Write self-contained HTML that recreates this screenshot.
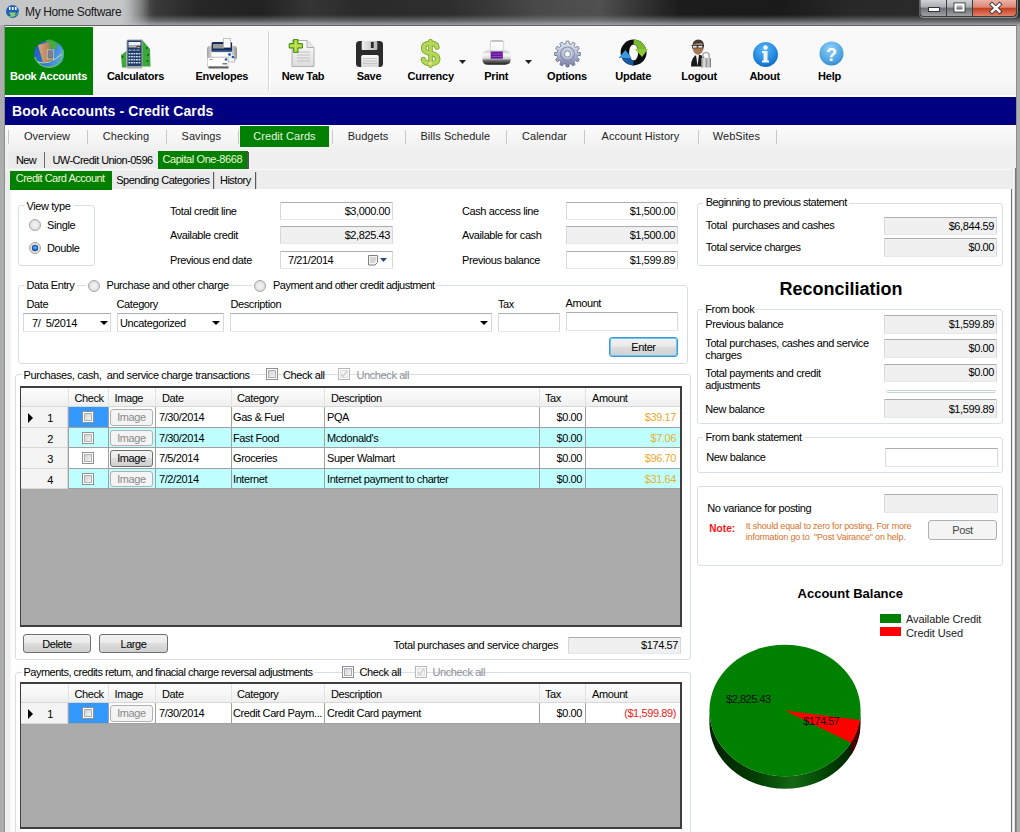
<!DOCTYPE html><html><head><meta charset='utf-8'><style>
*{margin:0;padding:0}
html,body{width:1020px;height:832px;overflow:hidden;background:#acaeae;font-family:"Liberation Sans",sans-serif;}
.t{position:absolute;white-space:nowrap;}
.b{position:absolute;}
.btn{border:1px solid #707070;border-radius:3px;box-sizing:border-box;background:linear-gradient(#f2f2f2 0%,#ebebeb 45%,#dddddd 50%,#cfcfcf 100%);}
</style></head><body><div class="b" style="left:0px;top:0px;width:1020px;height:26px;background:linear-gradient(90deg,#c2c4c6 0px,#c0c2c4 118px,#707070 135px,#3a3a3a 155px,#262626 200px,#222 260px,#353535 310px,#2a2a2a 360px,#2e2e2e 450px,#3c3c3c 500px,#4a4a4a 540px,#505050 600px,#3a3a3a 630px,#1c1c1c 680px,#1a1a1a 780px,#282828 850px,#2c2c2c 1020px);"></div><div class="b" style="left:0px;top:15px;width:1020px;height:11px;background:linear-gradient(rgba(150,152,155,0) 0%,rgba(150,153,157,0.55) 55%,rgba(175,178,182,0.95) 100%);"></div><div class="b" style="left:0px;top:0px;width:150px;height:25px;background:linear-gradient(90deg,rgba(196,198,200,1) 80%,rgba(196,198,200,0) 100%);"></div><svg class="b" style="left:5px;top:4px" width="15" height="15"><circle cx="7.5" cy="7.5" r="6.5" fill="#1f5fb8"/><rect x="4" y="3" width="1.6" height="3" fill="#fff"/><rect x="7" y="3" width="1.6" height="3" fill="#fff"/><rect x="10" y="3" width="1.6" height="3" fill="#fff"/><path d="M4 8.5 L11 8.5 L9 12 L6 12 Z" fill="#8fd06a"/><path d="M2 12 Q8 15 14 8" stroke="#7fd060" stroke-width="1" fill="none"/></svg><div class="t" style="top:5.34px;font-size:12px;line-height:15px;font-weight:normal;color:#1a1a1a;letter-spacing:-0.36px;left:25px;">My Home Software</div><svg class="b" style="left:918px;top:0px" width="101" height="19" viewBox="0 0 101 19">
<defs>
<linearGradient id="wbg" x1="0" y1="0" x2="0" y2="1"><stop offset="0" stop-color="#d0d3d6"/><stop offset="0.45" stop-color="#a9adb2"/><stop offset="0.5" stop-color="#6c7076"/><stop offset="1" stop-color="#9ea2a6"/></linearGradient>
<linearGradient id="wbr" x1="0" y1="0" x2="0" y2="1"><stop offset="0" stop-color="#ecb2a6"/><stop offset="0.45" stop-color="#dc8878"/><stop offset="0.52" stop-color="#c4401e"/><stop offset="1" stop-color="#e2806a"/></linearGradient>
</defs>
<path d="M1 0 L1 13 Q1 18 6 18 L95 18 Q100 18 100 13 L100 0 Z" fill="#d8dadc" opacity="0.5"/>
<path d="M1.5 0 L1.5 12.5 Q1.5 17 6 17 L94.5 17 Q99 17 99 12.5 L99 0 Z" fill="#3a3c3e"/>
<path d="M2.5 0 L2.5 12 Q2.5 16 6 16 L28 16 L28 0 Z" fill="url(#wbg)"/>
<rect x="29" y="0" width="25" height="16" fill="url(#wbg)"/>
<path d="M55 0 L55 16 L94 16 Q98 16 98 12 L98 0 Z" fill="url(#wbr)"/>
<rect x="10.5" y="7.5" width="11" height="4" fill="#fff" stroke="#333" stroke-width="1"/>
<rect x="36" y="3" width="11" height="9" fill="none" stroke="#333" stroke-width="1"/>
<rect x="37.5" y="4.5" width="8" height="6" fill="none" stroke="#fff" stroke-width="2"/>
<path d="M74 4.5 L81.5 11.5 M81.5 4.5 L74 11.5" stroke="#333" stroke-width="4.2" stroke-linecap="square"/>
<path d="M74 4.5 L81.5 11.5 M81.5 4.5 L74 11.5" stroke="#fff" stroke-width="2.4" stroke-linecap="square"/>
</svg><div class="b" style="left:4px;top:25px;width:1013px;height:807px;background:#f0f0f0;border:1px solid #8a8c8e;border-top-color:#606468;border-bottom:none;box-sizing:border-box;"></div><div class="b" style="left:5px;top:26px;width:1011px;height:70px;background:linear-gradient(#f9f9f9 0%,#f8f8f8 80%,#f0f0f0 100%);"></div><div class="b" style="left:5px;top:27px;width:88px;height:68px;background:#008000;"></div><div class="b" style="left:268px;top:31px;width:1px;height:60px;background:#d6d6d6;"></div><div class="b" style="left:269px;top:31px;width:1px;height:60px;background:#ffffff;"></div><div class="b" style="left:5px;top:95px;width:1011px;height:2px;background:#fff;"></div><div class="t" style="top:69.19px;font-size:11px;line-height:14px;font-weight:bold;color:#fff;letter-spacing:-0.25px;left:-251.5px;width:600px;text-align:center;">Book Accounts</div><div class="t" style="top:69.19px;font-size:11px;line-height:14px;font-weight:bold;color:#000;letter-spacing:-0.25px;left:-164.5px;width:600px;text-align:center;">Calculators</div><div class="t" style="top:69.19px;font-size:11px;line-height:14px;font-weight:bold;color:#000;letter-spacing:-0.25px;left:-78.19999999999999px;width:600px;text-align:center;">Envelopes</div><div class="t" style="top:69.19px;font-size:11px;line-height:14px;font-weight:bold;color:#000;letter-spacing:-0.25px;left:3px;width:600px;text-align:center;">New Tab</div><div class="t" style="top:69.19px;font-size:11px;line-height:14px;font-weight:bold;color:#000;letter-spacing:-0.25px;left:69px;width:600px;text-align:center;">Save</div><div class="t" style="top:69.19px;font-size:11px;line-height:14px;font-weight:bold;color:#000;letter-spacing:-0.25px;left:130.7px;width:600px;text-align:center;">Currency</div><div class="t" style="top:69.19px;font-size:11px;line-height:14px;font-weight:bold;color:#000;letter-spacing:-0.25px;left:196.2px;width:600px;text-align:center;">Print</div><div class="t" style="top:69.19px;font-size:11px;line-height:14px;font-weight:bold;color:#000;letter-spacing:-0.25px;left:267px;width:600px;text-align:center;">Options</div><div class="t" style="top:69.19px;font-size:11px;line-height:14px;font-weight:bold;color:#000;letter-spacing:-0.25px;left:333.20000000000005px;width:600px;text-align:center;">Update</div><div class="t" style="top:69.19px;font-size:11px;line-height:14px;font-weight:bold;color:#000;letter-spacing:-0.25px;left:399.1px;width:600px;text-align:center;">Logout</div><div class="t" style="top:69.19px;font-size:11px;line-height:14px;font-weight:bold;color:#000;letter-spacing:-0.25px;left:464.70000000000005px;width:600px;text-align:center;">About</div><div class="t" style="top:69.19px;font-size:11px;line-height:14px;font-weight:bold;color:#000;letter-spacing:-0.25px;left:529.5px;width:600px;text-align:center;">Help</div><svg class="b" style="left:459px;top:60px" width="7" height="4"><path d="M0 0 L7 0 L3.5 4 Z" fill="#222"/></svg><svg class="b" style="left:525px;top:60px" width="7" height="4"><path d="M0 0 L7 0 L3.5 4 Z" fill="#222"/></svg><div class="b" style="left:5px;top:97px;width:1011px;height:28px;background:#000080;"></div><div class="t" style="top:102.15px;font-size:14px;line-height:18px;font-weight:bold;color:#fff;letter-spacing:0.1px;left:12px;">Book Accounts - Credit Cards</div><div class="b" style="left:5px;top:125px;width:1011px;height:26px;background:linear-gradient(#fbfbfb,#f0f0f0);"></div><div class="b" style="left:8px;top:130px;width:1px;height:14px;background:#c8c8c8;"></div><div class="b" style="left:87px;top:130px;width:1px;height:14px;background:#c8c8c8;"></div><div class="b" style="left:166px;top:130px;width:1px;height:14px;background:#c8c8c8;"></div><div class="b" style="left:238px;top:130px;width:1px;height:14px;background:#c8c8c8;"></div><div class="b" style="left:332px;top:130px;width:1px;height:14px;background:#c8c8c8;"></div><div class="b" style="left:405px;top:130px;width:1px;height:14px;background:#c8c8c8;"></div><div class="b" style="left:506px;top:130px;width:1px;height:14px;background:#c8c8c8;"></div><div class="b" style="left:584px;top:130px;width:1px;height:14px;background:#c8c8c8;"></div><div class="b" style="left:698px;top:130px;width:1px;height:14px;background:#c8c8c8;"></div><div class="b" style="left:776px;top:130px;width:1px;height:14px;background:#c8c8c8;"></div><div class="b" style="left:240px;top:126px;width:89px;height:21px;background:#008000;"></div><div class="t" style="top:129.19px;font-size:11px;line-height:14px;font-weight:normal;color:#1e1e1e;letter-spacing:0.05px;left:-253px;width:600px;text-align:center;">Overview</div><div class="t" style="top:129.19px;font-size:11px;line-height:14px;font-weight:normal;color:#1e1e1e;letter-spacing:0.05px;left:-174px;width:600px;text-align:center;">Checking</div><div class="t" style="top:129.19px;font-size:11px;line-height:14px;font-weight:normal;color:#1e1e1e;letter-spacing:0.05px;left:-98.69999999999999px;width:600px;text-align:center;">Savings</div><div class="t" style="top:129.19px;font-size:11px;line-height:14px;font-weight:normal;color:#e8f5e0;letter-spacing:0.05px;left:-15.5px;width:600px;text-align:center;">Credit Cards</div><div class="t" style="top:129.19px;font-size:11px;line-height:14px;font-weight:normal;color:#1e1e1e;letter-spacing:0.05px;left:68px;width:600px;text-align:center;">Budgets</div><div class="t" style="top:129.19px;font-size:11px;line-height:14px;font-weight:normal;color:#1e1e1e;letter-spacing:0.05px;left:155.3px;width:600px;text-align:center;">Bills Schedule</div><div class="t" style="top:129.19px;font-size:11px;line-height:14px;font-weight:normal;color:#1e1e1e;letter-spacing:0.05px;left:244.5px;width:600px;text-align:center;">Calendar</div><div class="t" style="top:129.19px;font-size:11px;line-height:14px;font-weight:normal;color:#1e1e1e;letter-spacing:0.05px;left:340.5px;width:600px;text-align:center;">Account History</div><div class="t" style="top:129.19px;font-size:11px;line-height:14px;font-weight:normal;color:#1e1e1e;letter-spacing:0.05px;left:436.4px;width:600px;text-align:center;">WebSites</div><div class="b" style="left:5px;top:151px;width:1011px;height:20px;background:#f0f0f0;"></div><div class="b" style="left:8px;top:152px;width:150px;height:16px;background:#ebebeb;"></div><div class="b" style="left:44px;top:152px;width:1px;height:16px;background:#6a6a6a;"></div><div class="b" style="left:158px;top:151px;width:90px;height:18px;background:#008000;"></div><div class="b" style="left:247px;top:152px;width:2px;height:17px;background:#555;"></div><div class="t" style="top:152.69px;font-size:11px;line-height:14px;font-weight:normal;color:#000;letter-spacing:-0.6px;left:-274px;width:600px;text-align:center;">New</div><div class="t" style="top:152.69px;font-size:11px;line-height:14px;font-weight:normal;color:#000;letter-spacing:-0.55px;left:-197.5px;width:600px;text-align:center;">UW-Credit Union-0596</div><div class="t" style="top:151.69px;font-size:11px;line-height:14px;font-weight:normal;color:#f0f5d8;letter-spacing:-0.4px;left:-97.69999999999999px;width:600px;text-align:center;">Capital One-8668</div><div class="b" style="left:5px;top:169px;width:1011px;height:1px;background:#f8f8f8;"></div><div class="b" style="left:5px;top:170px;width:1011px;height:20px;background:#ededed;"></div><div class="b" style="left:10px;top:171px;width:102px;height:20px;background:#008000;"></div><div class="b" style="left:112px;top:172px;width:144px;height:17px;background:#ebebeb;"></div><div class="b" style="left:213px;top:172px;width:1px;height:17px;background:#5a5a5a;"></div><div class="b" style="left:214px;top:172px;width:1px;height:17px;background:#d0d0d0;"></div><div class="b" style="left:255px;top:172px;width:1px;height:17px;background:#5a5a5a;"></div><div class="b" style="left:256px;top:172px;width:1px;height:17px;background:#d0d0d0;"></div><div class="t" style="top:171.19px;font-size:11px;line-height:14px;font-weight:normal;color:#f0f5d8;letter-spacing:-0.5px;left:-239.8px;width:600px;text-align:center;">Credit Card Account</div><div class="t" style="top:173.19px;font-size:11px;line-height:14px;font-weight:normal;color:#000;letter-spacing:-0.5px;left:-137.2px;width:600px;text-align:center;">Spending Categories</div><div class="t" style="top:173.19px;font-size:11px;line-height:14px;font-weight:normal;color:#000;letter-spacing:-0.5px;left:-64.69999999999999px;width:600px;text-align:center;">History</div><div class="b" style="left:5px;top:190px;width:1011px;height:642px;background:#f0f0f0;"></div><div class="b" style="left:5px;top:190px;width:7px;height:642px;background:linear-gradient(90deg,#fafafa 0px,#f0f0f0 1px,#eeeeee 5px,#fafafa 8px);"></div><div class="b" style="left:10px;top:189px;width:1001px;height:643px;background:linear-gradient(90deg,#f6f6f6 0px,#fff 3px);"></div><div class="b" style="left:1011px;top:189px;width:1px;height:643px;background:#6e6e6e;"></div><div class="b" style="left:10px;top:189px;width:102px;height:1px;background:#008000;"></div><div class="b" style="left:1012px;top:168px;width:3px;height:664px;background:#e4e4e4;"></div><div class="b" style="left:1013px;top:168px;width:1px;height:664px;background:#fafafa;"></div><div class="b" style="left:1015px;top:168px;width:1px;height:664px;background:#7a7a7a;"></div><div class="b" style="left:18px;top:205px;width:77px;height:61px;border:1px solid #d5dfe5;border-radius:3px;box-sizing:border-box;"></div><div class="b" style="left:24px;top:204px;width:50px;height:3px;background:#fff;"></div><div class="t" style="top:198.79px;font-size:11px;line-height:14px;font-weight:normal;color:#000;letter-spacing:-0.4px;left:26.5px;">View type</div><svg class="b" style="left:29px;top:219px" width="12" height="12"><defs><radialGradient id="rg29219" cx="0.5" cy="0.5" r="0.5"><stop offset="0" stop-color="#f6f6f6"/><stop offset="0.7" stop-color="#e6e6e6"/><stop offset="1" stop-color="#d0d0d0"/></radialGradient><radialGradient id="rd29219" cx="0.5" cy="0.45" r="0.55"><stop offset="0" stop-color="#7cc8fa"/><stop offset="0.5" stop-color="#2a7ad8"/><stop offset="1" stop-color="#143c78"/></radialGradient></defs><circle cx="6" cy="6" r="5.5" fill="url(#rg29219)" stroke="#a8a8a8" stroke-width="1"/></svg><div class="t" style="top:217.99px;font-size:11px;line-height:14px;font-weight:normal;color:#000;letter-spacing:-0.4px;left:47px;">Single</div><svg class="b" style="left:29px;top:242px" width="12" height="12"><defs><radialGradient id="rg29242" cx="0.5" cy="0.5" r="0.5"><stop offset="0" stop-color="#f6f6f6"/><stop offset="0.7" stop-color="#e6e6e6"/><stop offset="1" stop-color="#d0d0d0"/></radialGradient><radialGradient id="rd29242" cx="0.5" cy="0.45" r="0.55"><stop offset="0" stop-color="#7cc8fa"/><stop offset="0.5" stop-color="#2a7ad8"/><stop offset="1" stop-color="#143c78"/></radialGradient></defs><circle cx="6" cy="6" r="5.5" fill="url(#rg29242)" stroke="#a8a8a8" stroke-width="1"/><circle cx="6" cy="6" r="3.2" fill="url(#rd29242)"/></svg><div class="t" style="top:240.99px;font-size:11px;line-height:14px;font-weight:normal;color:#000;letter-spacing:-0.4px;left:47px;">Double</div><div class="t" style="top:204.19px;font-size:11px;line-height:14px;font-weight:normal;color:#000;letter-spacing:-0.4px;left:170px;">Total credit line</div><div class="t" style="top:228.19px;font-size:11px;line-height:14px;font-weight:normal;color:#000;letter-spacing:-0.4px;left:170px;">Available credit</div><div class="t" style="top:252.69px;font-size:11px;line-height:14px;font-weight:normal;color:#000;letter-spacing:-0.4px;left:170px;">Previous end date</div><div class="b" style="left:280px;top:202px;width:113px;height:18px;background:#fff;border:1px solid #d5d9de;border-top-color:#abadb3;border-bottom-color:#e3e9ef;box-sizing:border-box;border-radius:1px;"></div><div class="t" style="top:204.19px;font-size:11px;line-height:14px;font-weight:normal;color:#000;letter-spacing:-0.4px;right:630px;text-align:right;">$3,000.00</div><div class="b" style="left:280px;top:226px;width:113px;height:18px;background:#f0f0f0;border:1px solid #d5d9de;border-top-color:#abadb3;border-bottom-color:#e3e9ef;box-sizing:border-box;border-radius:1px;"></div><div class="t" style="top:228.19px;font-size:11px;line-height:14px;font-weight:normal;color:#000;letter-spacing:-0.4px;right:630px;text-align:right;">$2,825.43</div><div class="b" style="left:280px;top:251px;width:113px;height:18px;background:#fff;border:1px solid #d5d9de;border-top-color:#abadb3;border-bottom-color:#e3e9ef;box-sizing:border-box;border-radius:1px;"></div><div class="t" style="top:252.79px;font-size:11px;line-height:14px;font-weight:normal;color:#000;letter-spacing:-0.4px;left:288px;">7/21/2014</div><svg class="b" style="left:367px;top:254px" width="21" height="13"><path d="M1.5 1.5 h9 v7 l-2.5 2.5 h-6.5 Z" fill="#f4f4f4" stroke="#808080" stroke-width="1"/><path d="M3 4h6M3 6h6M3 8h5" stroke="#b8b8b8" stroke-width="1"/><path d="M13 4 L20 4 L16.5 8 Z" fill="#2a4a80"/></svg><div class="t" style="top:204.19px;font-size:11px;line-height:14px;font-weight:normal;color:#000;letter-spacing:-0.4px;left:462px;">Cash access line</div><div class="t" style="top:228.19px;font-size:11px;line-height:14px;font-weight:normal;color:#000;letter-spacing:-0.4px;left:462px;">Available for cash</div><div class="t" style="top:252.69px;font-size:11px;line-height:14px;font-weight:normal;color:#000;letter-spacing:-0.4px;left:462px;">Previous balance</div><div class="b" style="left:566px;top:202px;width:112px;height:18px;background:#fff;border:1px solid #d5d9de;border-top-color:#abadb3;border-bottom-color:#e3e9ef;box-sizing:border-box;border-radius:1px;"></div><div class="t" style="top:204.19px;font-size:11px;line-height:14px;font-weight:normal;color:#000;letter-spacing:-0.4px;right:345px;text-align:right;">$1,500.00</div><div class="b" style="left:566px;top:226px;width:112px;height:18px;background:#f0f0f0;border:1px solid #d5d9de;border-top-color:#abadb3;border-bottom-color:#e3e9ef;box-sizing:border-box;border-radius:1px;"></div><div class="t" style="top:228.19px;font-size:11px;line-height:14px;font-weight:normal;color:#000;letter-spacing:-0.4px;right:345px;text-align:right;">$1,500.00</div><div class="b" style="left:566px;top:251px;width:112px;height:18px;background:#fff;border:1px solid #d5d9de;border-top-color:#abadb3;border-bottom-color:#e3e9ef;box-sizing:border-box;border-radius:1px;"></div><div class="t" style="top:252.69px;font-size:11px;line-height:14px;font-weight:normal;color:#000;letter-spacing:-0.4px;right:345px;text-align:right;">$1,599.89</div><div class="b" style="left:18px;top:285px;width:670px;height:79px;border:1px solid #d5dfe5;border-radius:3px;box-sizing:border-box;"></div><div class="b" style="left:24px;top:280px;width:53px;height:12px;background:#fff;"></div><div class="b" style="left:86px;top:280px;width:144px;height:12px;background:#fff;"></div><div class="b" style="left:252px;top:280px;width:184px;height:12px;background:#fff;"></div><div class="t" style="top:278.19px;font-size:11px;line-height:14px;font-weight:normal;color:#000;letter-spacing:-0.4px;left:26.5px;">Data Entry</div><svg class="b" style="left:88px;top:280px" width="12" height="12"><defs><radialGradient id="rg88280" cx="0.5" cy="0.5" r="0.5"><stop offset="0" stop-color="#f6f6f6"/><stop offset="0.7" stop-color="#e6e6e6"/><stop offset="1" stop-color="#d0d0d0"/></radialGradient><radialGradient id="rd88280" cx="0.5" cy="0.45" r="0.55"><stop offset="0" stop-color="#7cc8fa"/><stop offset="0.5" stop-color="#2a7ad8"/><stop offset="1" stop-color="#143c78"/></radialGradient></defs><circle cx="6" cy="6" r="5.5" fill="url(#rg88280)" stroke="#a8a8a8" stroke-width="1"/></svg><div class="t" style="top:278.19px;font-size:11px;line-height:14px;font-weight:normal;color:#000;letter-spacing:-0.42px;left:106.5px;">Purchase and other charge</div><svg class="b" style="left:254px;top:280px" width="12" height="12"><defs><radialGradient id="rg254280" cx="0.5" cy="0.5" r="0.5"><stop offset="0" stop-color="#f6f6f6"/><stop offset="0.7" stop-color="#e6e6e6"/><stop offset="1" stop-color="#d0d0d0"/></radialGradient><radialGradient id="rd254280" cx="0.5" cy="0.45" r="0.55"><stop offset="0" stop-color="#7cc8fa"/><stop offset="0.5" stop-color="#2a7ad8"/><stop offset="1" stop-color="#143c78"/></radialGradient></defs><circle cx="6" cy="6" r="5.5" fill="url(#rg254280)" stroke="#a8a8a8" stroke-width="1"/></svg><div class="t" style="top:278.19px;font-size:11px;line-height:14px;font-weight:normal;color:#000;letter-spacing:-0.52px;left:273px;">Payment and other credit adjustment</div><div class="t" style="top:297.19px;font-size:11px;line-height:14px;font-weight:normal;color:#000;letter-spacing:-0.4px;left:26.5px;">Date</div><div class="t" style="top:297.19px;font-size:11px;line-height:14px;font-weight:normal;color:#000;letter-spacing:-0.4px;left:116.5px;">Category</div><div class="t" style="top:297.19px;font-size:11px;line-height:14px;font-weight:normal;color:#000;letter-spacing:-0.4px;left:230.5px;">Description</div><div class="t" style="top:297.19px;font-size:11px;line-height:14px;font-weight:normal;color:#000;letter-spacing:-0.4px;left:498px;">Tax</div><div class="t" style="top:296.19px;font-size:11px;line-height:14px;font-weight:normal;color:#000;letter-spacing:-0.4px;left:565.5px;">Amount</div><div class="b" style="left:23px;top:313px;width:88px;height:19px;background:#fff;border:1px solid #d5d9de;border-top-color:#abadb3;border-bottom-color:#e3e9ef;box-sizing:border-box;border-radius:1px;"></div><div class="t" style="top:316.19px;font-size:11px;line-height:14px;font-weight:normal;color:#000;letter-spacing:-0.4px;left:32px;">7/&nbsp;&nbsp;5/2014</div><div class="b" style="left:117px;top:313px;width:107px;height:19px;background:#fff;border:1px solid #d5d9de;border-top-color:#abadb3;border-bottom-color:#e3e9ef;box-sizing:border-box;border-radius:1px;"></div><div class="t" style="top:316.19px;font-size:11px;line-height:14px;font-weight:normal;color:#000;letter-spacing:-0.4px;left:120px;">Uncategorized</div><div class="b" style="left:230px;top:313px;width:262px;height:19px;background:#fff;border:1px solid #d5d9de;border-top-color:#abadb3;border-bottom-color:#e3e9ef;box-sizing:border-box;border-radius:1px;"></div><svg class="b" style="left:99.5px;top:321px" width="8" height="4"><path d="M0 0 L8 0 L4 4 Z" fill="#000"/></svg><svg class="b" style="left:212px;top:321px" width="8" height="4"><path d="M0 0 L8 0 L4 4 Z" fill="#000"/></svg><svg class="b" style="left:480px;top:321px" width="8" height="4"><path d="M0 0 L8 0 L4 4 Z" fill="#000"/></svg><div class="b" style="left:498px;top:313px;width:62px;height:19px;background:#fff;border:1px solid #d5d9de;border-top-color:#abadb3;border-bottom-color:#e3e9ef;box-sizing:border-box;border-radius:1px;"></div><div class="b" style="left:566px;top:312px;width:112px;height:19px;background:#fff;border:1px solid #d5d9de;border-top-color:#abadb3;border-bottom-color:#e3e9ef;box-sizing:border-box;border-radius:1px;"></div><div class="b btn" style="left:609px;top:337px;width:69px;height:20px;border-color:#3c9ad6;border-width:1px;box-shadow:inset 0 0 0 1px #6dc3ef;"></div><div class="t" style="top:340.19px;font-size:11px;line-height:14px;font-weight:normal;color:#000;letter-spacing:-0.4px;left:343.5px;width:600px;text-align:center;">Enter</div><div class="b" style="left:15px;top:374px;width:676px;height:286px;border:1px solid #d5dfe5;border-radius:3px;box-sizing:border-box;"></div><div class="b" style="left:22px;top:368px;width:229px;height:14px;background:#fff;"></div><div class="t" style="top:368.19px;font-size:11px;line-height:14px;font-weight:normal;color:#000;letter-spacing:-0.4px;left:23.5px;">Purchases, cash,&nbsp; and service charge transactions</div><svg class="b" style="left:266px;top:368px" width="13" height="13" viewBox="0 0 13 13"><defs><linearGradient id="cb266_368" x1="0" y1="0" x2="1" y2="1"><stop offset="0" stop-color="#cbcfd5"/><stop offset="1" stop-color="#f6f6f6"/></linearGradient></defs><rect x="0.5" y="0.5" width="11" height="11" fill="#fff" stroke="#8e8f8f"/><rect x="2.5" y="2.5" width="7" height="7" fill="url(#cb266_368)" stroke="#b0b0b0" stroke-width="1"/></svg><div class="t" style="top:368.19px;font-size:11px;line-height:14px;font-weight:normal;color:#000;letter-spacing:-0.4px;left:283px;">Check all</div><svg class="b" style="left:338px;top:368px" width="13" height="13" viewBox="0 0 13 13"><defs><linearGradient id="cb338_368" x1="0" y1="0" x2="1" y2="1"><stop offset="0" stop-color="#cbcfd5"/><stop offset="1" stop-color="#f6f6f6"/></linearGradient></defs><rect x="0.5" y="0.5" width="11" height="11" fill="#fff" stroke="#b8b8b8"/><rect x="2.5" y="2.5" width="7" height="7" fill="#f4f4f4" stroke="#e0e0e0" stroke-width="1"/><path d="M3 6 L5 8.5 L9 2.5" stroke="#c8c8c8" stroke-width="1.2" fill="none"/></svg><div class="t" style="top:368.19px;font-size:11px;line-height:14px;font-weight:normal;color:#8d8d95;letter-spacing:-0.4px;left:356.5px;">Uncheck all</div><div class="b" style="left:20px;top:386px;width:662px;height:241px;background:#ababab;border:2px solid #3e3e3e;border-width:2px 2px 2px 1.5px;box-sizing:border-box;"></div><div class="b" style="left:21px;top:388px;width:659px;height:19px;background:linear-gradient(#fcfcfc 0%,#f7f7f7 50%,#efefef 100%);border-bottom:1px solid #d8d8d8;box-sizing:border-box;"></div><div class="b" style="left:68px;top:388px;width:1px;height:19px;background:#e2e2e2;"></div><div class="b" style="left:108px;top:388px;width:1px;height:19px;background:#e2e2e2;"></div><div class="b" style="left:155px;top:388px;width:1px;height:19px;background:#e2e2e2;"></div><div class="b" style="left:231px;top:388px;width:1px;height:19px;background:#e2e2e2;"></div><div class="b" style="left:324px;top:388px;width:1px;height:19px;background:#e2e2e2;"></div><div class="b" style="left:539px;top:388px;width:1px;height:19px;background:#e2e2e2;"></div><div class="b" style="left:585px;top:388px;width:1px;height:19px;background:#e2e2e2;"></div><div class="t" style="top:391.19px;font-size:11px;line-height:14px;font-weight:normal;color:#000;letter-spacing:-0.4px;left:74.5px;">Check</div><div class="t" style="top:391.19px;font-size:11px;line-height:14px;font-weight:normal;color:#000;letter-spacing:-0.4px;left:114.5px;">Image</div><div class="t" style="top:391.19px;font-size:11px;line-height:14px;font-weight:normal;color:#000;letter-spacing:-0.4px;left:162px;">Date</div><div class="t" style="top:391.19px;font-size:11px;line-height:14px;font-weight:normal;color:#000;letter-spacing:-0.4px;left:237px;">Category</div><div class="t" style="top:391.19px;font-size:11px;line-height:14px;font-weight:normal;color:#000;letter-spacing:-0.4px;left:331px;">Description</div><div class="t" style="top:391.19px;font-size:11px;line-height:14px;font-weight:normal;color:#000;letter-spacing:-0.4px;left:545px;">Tax</div><div class="t" style="top:391.19px;font-size:11px;line-height:14px;font-weight:normal;color:#000;letter-spacing:-0.4px;left:592px;">Amount</div><div class="b" style="left:21px;top:407px;width:47px;height:21px;background:#f4f4f4;border-bottom:1px solid #d8d8d8;border-right:1px solid #d8d8d8;box-sizing:border-box;"></div><div class="b" style="left:68px;top:407px;width:612px;height:21px;background:#ffffff;border-bottom:1px solid #a0a0a0;box-sizing:border-box;"></div><div class="b" style="left:69px;top:407px;width:39px;height:20px;background:#3399ff;"></div><div class="b" style="left:68px;top:407px;width:1px;height:21px;background:#a0a0a0;"></div><div class="b" style="left:108px;top:407px;width:1px;height:21px;background:#a0a0a0;"></div><div class="b" style="left:155px;top:407px;width:1px;height:21px;background:#a0a0a0;"></div><div class="b" style="left:231px;top:407px;width:1px;height:21px;background:#a0a0a0;"></div><div class="b" style="left:324px;top:407px;width:1px;height:21px;background:#a0a0a0;"></div><div class="b" style="left:539px;top:407px;width:1px;height:21px;background:#a0a0a0;"></div><div class="b" style="left:585px;top:407px;width:1px;height:21px;background:#a0a0a0;"></div><svg class="b" style="left:28px;top:413px" width="6" height="10"><path d="M0 0 L5 5 L0 10 Z" fill="#000"/></svg><div class="t" style="top:411.49px;font-size:11px;line-height:14px;font-weight:normal;color:#000;letter-spacing:-0.4px;left:-250px;width:600px;text-align:center;">1</div><svg class="b" style="left:82px;top:411px" width="13" height="13" viewBox="0 0 13 13"><defs><linearGradient id="cb82_411" x1="0" y1="0" x2="1" y2="1"><stop offset="0" stop-color="#cbcfd5"/><stop offset="1" stop-color="#f6f6f6"/></linearGradient></defs><rect x="0.5" y="0.5" width="11" height="11" fill="#fff" stroke="#8e8f8f"/><rect x="2.5" y="2.5" width="7" height="7" fill="url(#cb82_411)" stroke="#b0b0b0" stroke-width="1"/></svg><div class="b" style="left:110px;top:409px;width:43px;height:17px;border:1px solid #adb2b5;border-radius:3px;box-sizing:border-box;background:#f4f4f4;"></div><div class="t" style="top:410.49px;font-size:11px;line-height:14px;font-weight:normal;color:#8a8a8a;letter-spacing:-0.4px;left:-168.5px;width:600px;text-align:center;">Image</div><div class="t" style="top:410.49px;font-size:11px;line-height:14px;font-weight:normal;color:#000;letter-spacing:-0.4px;left:159px;">7/30/2014</div><div class="t" style="top:410.49px;font-size:11px;line-height:14px;font-weight:normal;color:#000;letter-spacing:-0.4px;left:233px;">Gas &amp; Fuel</div><div class="t" style="top:410.49px;font-size:11px;line-height:14px;font-weight:normal;color:#000;letter-spacing:-0.4px;left:327px;">PQA</div><div class="t" style="top:410.49px;font-size:11px;line-height:14px;font-weight:normal;color:#000;letter-spacing:-0.4px;right:438px;text-align:right;">$0.00</div><div class="t" style="top:410.49px;font-size:11px;line-height:14px;font-weight:normal;color:#f0a830;letter-spacing:-0.4px;right:344px;text-align:right;">$39.17</div><div class="b" style="left:21px;top:428px;width:47px;height:20px;background:#f4f4f4;border-bottom:1px solid #d8d8d8;border-right:1px solid #d8d8d8;box-sizing:border-box;"></div><div class="b" style="left:68px;top:428px;width:612px;height:20px;background:#bfffff;border-bottom:1px solid #a0a0a0;box-sizing:border-box;"></div><div class="b" style="left:68px;top:428px;width:1px;height:20px;background:#a0a0a0;"></div><div class="b" style="left:108px;top:428px;width:1px;height:20px;background:#a0a0a0;"></div><div class="b" style="left:155px;top:428px;width:1px;height:20px;background:#a0a0a0;"></div><div class="b" style="left:231px;top:428px;width:1px;height:20px;background:#a0a0a0;"></div><div class="b" style="left:324px;top:428px;width:1px;height:20px;background:#a0a0a0;"></div><div class="b" style="left:539px;top:428px;width:1px;height:20px;background:#a0a0a0;"></div><div class="b" style="left:585px;top:428px;width:1px;height:20px;background:#a0a0a0;"></div><div class="t" style="top:432.49px;font-size:11px;line-height:14px;font-weight:normal;color:#000;letter-spacing:-0.4px;left:-250px;width:600px;text-align:center;">2</div><svg class="b" style="left:82px;top:432px" width="13" height="13" viewBox="0 0 13 13"><defs><linearGradient id="cb82_432" x1="0" y1="0" x2="1" y2="1"><stop offset="0" stop-color="#cbcfd5"/><stop offset="1" stop-color="#f6f6f6"/></linearGradient></defs><rect x="0.5" y="0.5" width="11" height="11" fill="#fff" stroke="#8e8f8f"/><rect x="2.5" y="2.5" width="7" height="7" fill="url(#cb82_432)" stroke="#b0b0b0" stroke-width="1"/></svg><div class="b" style="left:110px;top:430px;width:43px;height:16px;border:1px solid #adb2b5;border-radius:3px;box-sizing:border-box;background:#f4f4f4;"></div><div class="t" style="top:431.49px;font-size:11px;line-height:14px;font-weight:normal;color:#8a8a8a;letter-spacing:-0.4px;left:-168.5px;width:600px;text-align:center;">Image</div><div class="t" style="top:431.49px;font-size:11px;line-height:14px;font-weight:normal;color:#000;letter-spacing:-0.4px;left:159px;">7/30/2014</div><div class="t" style="top:431.49px;font-size:11px;line-height:14px;font-weight:normal;color:#000;letter-spacing:-0.4px;left:233px;">Fast Food</div><div class="t" style="top:431.49px;font-size:11px;line-height:14px;font-weight:normal;color:#000;letter-spacing:-0.4px;left:327px;">Mcdonald's</div><div class="t" style="top:431.49px;font-size:11px;line-height:14px;font-weight:normal;color:#000;letter-spacing:-0.4px;right:438px;text-align:right;">$0.00</div><div class="t" style="top:431.49px;font-size:11px;line-height:14px;font-weight:normal;color:#e8b030;letter-spacing:-0.4px;right:344px;text-align:right;">$7.06</div><div class="b" style="left:21px;top:448px;width:47px;height:21px;background:#f4f4f4;border-bottom:1px solid #d8d8d8;border-right:1px solid #d8d8d8;box-sizing:border-box;"></div><div class="b" style="left:68px;top:448px;width:612px;height:21px;background:#ffffff;border-bottom:1px solid #a0a0a0;box-sizing:border-box;"></div><div class="b" style="left:68px;top:448px;width:1px;height:21px;background:#a0a0a0;"></div><div class="b" style="left:108px;top:448px;width:1px;height:21px;background:#a0a0a0;"></div><div class="b" style="left:155px;top:448px;width:1px;height:21px;background:#a0a0a0;"></div><div class="b" style="left:231px;top:448px;width:1px;height:21px;background:#a0a0a0;"></div><div class="b" style="left:324px;top:448px;width:1px;height:21px;background:#a0a0a0;"></div><div class="b" style="left:539px;top:448px;width:1px;height:21px;background:#a0a0a0;"></div><div class="b" style="left:585px;top:448px;width:1px;height:21px;background:#a0a0a0;"></div><div class="t" style="top:452.49px;font-size:11px;line-height:14px;font-weight:normal;color:#000;letter-spacing:-0.4px;left:-250px;width:600px;text-align:center;">3</div><svg class="b" style="left:82px;top:452px" width="13" height="13" viewBox="0 0 13 13"><defs><linearGradient id="cb82_452" x1="0" y1="0" x2="1" y2="1"><stop offset="0" stop-color="#cbcfd5"/><stop offset="1" stop-color="#f6f6f6"/></linearGradient></defs><rect x="0.5" y="0.5" width="11" height="11" fill="#fff" stroke="#8e8f8f"/><rect x="2.5" y="2.5" width="7" height="7" fill="url(#cb82_452)" stroke="#b0b0b0" stroke-width="1"/></svg><div class="b btn" style="left:110px;top:450px;width:43px;height:17px;border-color:#707070;"></div><div class="t" style="top:451.49px;font-size:11px;line-height:14px;font-weight:normal;color:#000;letter-spacing:-0.4px;left:-168.5px;width:600px;text-align:center;">Image</div><div class="t" style="top:451.49px;font-size:11px;line-height:14px;font-weight:normal;color:#000;letter-spacing:-0.4px;left:159px;">7/5/2014</div><div class="t" style="top:451.49px;font-size:11px;line-height:14px;font-weight:normal;color:#000;letter-spacing:-0.4px;left:233px;">Groceries</div><div class="t" style="top:451.49px;font-size:11px;line-height:14px;font-weight:normal;color:#000;letter-spacing:-0.4px;left:327px;">Super Walmart</div><div class="t" style="top:451.49px;font-size:11px;line-height:14px;font-weight:normal;color:#000;letter-spacing:-0.4px;right:438px;text-align:right;">$0.00</div><div class="t" style="top:451.49px;font-size:11px;line-height:14px;font-weight:normal;color:#f0a830;letter-spacing:-0.4px;right:344px;text-align:right;">$96.70</div><div class="b" style="left:21px;top:469px;width:47px;height:20px;background:#f4f4f4;border-bottom:1px solid #d8d8d8;border-right:1px solid #d8d8d8;box-sizing:border-box;"></div><div class="b" style="left:68px;top:469px;width:612px;height:20px;background:#bfffff;border-bottom:1px solid #a0a0a0;box-sizing:border-box;"></div><div class="b" style="left:68px;top:469px;width:1px;height:20px;background:#a0a0a0;"></div><div class="b" style="left:108px;top:469px;width:1px;height:20px;background:#a0a0a0;"></div><div class="b" style="left:155px;top:469px;width:1px;height:20px;background:#a0a0a0;"></div><div class="b" style="left:231px;top:469px;width:1px;height:20px;background:#a0a0a0;"></div><div class="b" style="left:324px;top:469px;width:1px;height:20px;background:#a0a0a0;"></div><div class="b" style="left:539px;top:469px;width:1px;height:20px;background:#a0a0a0;"></div><div class="b" style="left:585px;top:469px;width:1px;height:20px;background:#a0a0a0;"></div><div class="t" style="top:473.49px;font-size:11px;line-height:14px;font-weight:normal;color:#000;letter-spacing:-0.4px;left:-250px;width:600px;text-align:center;">4</div><svg class="b" style="left:82px;top:473px" width="13" height="13" viewBox="0 0 13 13"><defs><linearGradient id="cb82_473" x1="0" y1="0" x2="1" y2="1"><stop offset="0" stop-color="#cbcfd5"/><stop offset="1" stop-color="#f6f6f6"/></linearGradient></defs><rect x="0.5" y="0.5" width="11" height="11" fill="#fff" stroke="#8e8f8f"/><rect x="2.5" y="2.5" width="7" height="7" fill="url(#cb82_473)" stroke="#b0b0b0" stroke-width="1"/></svg><div class="b" style="left:110px;top:471px;width:43px;height:16px;border:1px solid #adb2b5;border-radius:3px;box-sizing:border-box;background:#f4f4f4;"></div><div class="t" style="top:472.49px;font-size:11px;line-height:14px;font-weight:normal;color:#8a8a8a;letter-spacing:-0.4px;left:-168.5px;width:600px;text-align:center;">Image</div><div class="t" style="top:472.49px;font-size:11px;line-height:14px;font-weight:normal;color:#000;letter-spacing:-0.4px;left:159px;">7/2/2014</div><div class="t" style="top:472.49px;font-size:11px;line-height:14px;font-weight:normal;color:#000;letter-spacing:-0.4px;left:233px;">Internet</div><div class="t" style="top:472.49px;font-size:11px;line-height:14px;font-weight:normal;color:#000;letter-spacing:-0.4px;left:327px;">Internet payment to charter</div><div class="t" style="top:472.49px;font-size:11px;line-height:14px;font-weight:normal;color:#000;letter-spacing:-0.4px;right:438px;text-align:right;">$0.00</div><div class="t" style="top:472.49px;font-size:11px;line-height:14px;font-weight:normal;color:#e8b030;letter-spacing:-0.4px;right:344px;text-align:right;">$31.64</div><div class="b btn" style="left:23px;top:634px;width:68px;height:19px;border-color:#707070;"></div><div class="t" style="top:637.19px;font-size:11px;line-height:14px;font-weight:normal;color:#000;letter-spacing:-0.4px;left:-243.0px;width:600px;text-align:center;">Delete</div><div class="b btn" style="left:99px;top:634px;width:69px;height:19px;border-color:#707070;"></div><div class="t" style="top:637.19px;font-size:11px;line-height:14px;font-weight:normal;color:#000;letter-spacing:-0.4px;left:-166.5px;width:600px;text-align:center;">Large</div><div class="t" style="top:638.19px;font-size:11px;line-height:14px;font-weight:normal;color:#000;letter-spacing:-0.4px;right:462px;text-align:right;">Total purchases and service charges</div><div class="b" style="left:568px;top:637px;width:113px;height:17px;background:#f0f0f0;border:1px solid #d5d9de;border-top-color:#abadb3;border-bottom-color:#e3e9ef;box-sizing:border-box;border-radius:1px;"></div><div class="t" style="top:638.19px;font-size:11px;line-height:14px;font-weight:normal;color:#000;letter-spacing:-0.4px;right:342px;text-align:right;">$174.57</div><div class="b" style="left:15px;top:672px;width:676px;height:168px;border:1px solid #d5dfe5;border-radius:3px;box-sizing:border-box;"></div><div class="b" style="left:22px;top:666px;width:293px;height:14px;background:#fff;"></div><div class="t" style="top:665.19px;font-size:11px;line-height:14px;font-weight:normal;color:#000;letter-spacing:-0.5px;left:23.5px;">Payments, credits retum, and finacial charge reversal adjustments</div><svg class="b" style="left:342px;top:666px" width="13" height="13" viewBox="0 0 13 13"><defs><linearGradient id="cb342_666" x1="0" y1="0" x2="1" y2="1"><stop offset="0" stop-color="#cbcfd5"/><stop offset="1" stop-color="#f6f6f6"/></linearGradient></defs><rect x="0.5" y="0.5" width="11" height="11" fill="#fff" stroke="#8e8f8f"/><rect x="2.5" y="2.5" width="7" height="7" fill="url(#cb342_666)" stroke="#b0b0b0" stroke-width="1"/></svg><div class="t" style="top:665.19px;font-size:11px;line-height:14px;font-weight:normal;color:#000;letter-spacing:-0.4px;left:359.5px;">Check all</div><svg class="b" style="left:415px;top:666px" width="13" height="13" viewBox="0 0 13 13"><defs><linearGradient id="cb415_666" x1="0" y1="0" x2="1" y2="1"><stop offset="0" stop-color="#cbcfd5"/><stop offset="1" stop-color="#f6f6f6"/></linearGradient></defs><rect x="0.5" y="0.5" width="11" height="11" fill="#fff" stroke="#b8b8b8"/><rect x="2.5" y="2.5" width="7" height="7" fill="#f4f4f4" stroke="#e0e0e0" stroke-width="1"/><path d="M3 6 L5 8.5 L9 2.5" stroke="#c8c8c8" stroke-width="1.2" fill="none"/></svg><div class="t" style="top:665.19px;font-size:11px;line-height:14px;font-weight:normal;color:#8d8d95;letter-spacing:-0.4px;left:432.5px;">Uncheck all</div><div class="b" style="left:20px;top:682px;width:662px;height:147px;background:#ababab;border:2px solid #3e3e3e;border-width:2px 2px 2px 1.5px;box-sizing:border-box;"></div><div class="b" style="left:21px;top:684px;width:659px;height:19px;background:linear-gradient(#fcfcfc 0%,#f7f7f7 50%,#efefef 100%);border-bottom:1px solid #d8d8d8;box-sizing:border-box;"></div><div class="b" style="left:68px;top:684px;width:1px;height:19px;background:#e2e2e2;"></div><div class="b" style="left:108px;top:684px;width:1px;height:19px;background:#e2e2e2;"></div><div class="b" style="left:155px;top:684px;width:1px;height:19px;background:#e2e2e2;"></div><div class="b" style="left:231px;top:684px;width:1px;height:19px;background:#e2e2e2;"></div><div class="b" style="left:324px;top:684px;width:1px;height:19px;background:#e2e2e2;"></div><div class="b" style="left:539px;top:684px;width:1px;height:19px;background:#e2e2e2;"></div><div class="b" style="left:585px;top:684px;width:1px;height:19px;background:#e2e2e2;"></div><div class="t" style="top:687.19px;font-size:11px;line-height:14px;font-weight:normal;color:#000;letter-spacing:-0.4px;left:74.5px;">Check</div><div class="t" style="top:687.19px;font-size:11px;line-height:14px;font-weight:normal;color:#000;letter-spacing:-0.4px;left:114.5px;">Image</div><div class="t" style="top:687.19px;font-size:11px;line-height:14px;font-weight:normal;color:#000;letter-spacing:-0.4px;left:162px;">Date</div><div class="t" style="top:687.19px;font-size:11px;line-height:14px;font-weight:normal;color:#000;letter-spacing:-0.4px;left:237px;">Category</div><div class="t" style="top:687.19px;font-size:11px;line-height:14px;font-weight:normal;color:#000;letter-spacing:-0.4px;left:331px;">Description</div><div class="t" style="top:687.19px;font-size:11px;line-height:14px;font-weight:normal;color:#000;letter-spacing:-0.4px;left:545px;">Tax</div><div class="t" style="top:687.19px;font-size:11px;line-height:14px;font-weight:normal;color:#000;letter-spacing:-0.4px;left:592px;">Amount</div><div class="b" style="left:21px;top:703px;width:47px;height:21px;background:#f4f4f4;border-bottom:1px solid #d8d8d8;border-right:1px solid #d8d8d8;box-sizing:border-box;"></div><div class="b" style="left:68px;top:703px;width:612px;height:21px;background:#ffffff;border-bottom:1px solid #a0a0a0;box-sizing:border-box;"></div><div class="b" style="left:69px;top:703px;width:39px;height:20px;background:#3399ff;"></div><div class="b" style="left:68px;top:703px;width:1px;height:21px;background:#a0a0a0;"></div><div class="b" style="left:108px;top:703px;width:1px;height:21px;background:#a0a0a0;"></div><div class="b" style="left:155px;top:703px;width:1px;height:21px;background:#a0a0a0;"></div><div class="b" style="left:231px;top:703px;width:1px;height:21px;background:#a0a0a0;"></div><div class="b" style="left:324px;top:703px;width:1px;height:21px;background:#a0a0a0;"></div><div class="b" style="left:539px;top:703px;width:1px;height:21px;background:#a0a0a0;"></div><div class="b" style="left:585px;top:703px;width:1px;height:21px;background:#a0a0a0;"></div><svg class="b" style="left:28px;top:709px" width="6" height="10"><path d="M0 0 L5 5 L0 10 Z" fill="#000"/></svg><div class="t" style="top:707.49px;font-size:11px;line-height:14px;font-weight:normal;color:#000;letter-spacing:-0.4px;left:-250px;width:600px;text-align:center;">1</div><svg class="b" style="left:82px;top:707px" width="13" height="13" viewBox="0 0 13 13"><defs><linearGradient id="cb82_707" x1="0" y1="0" x2="1" y2="1"><stop offset="0" stop-color="#cbcfd5"/><stop offset="1" stop-color="#f6f6f6"/></linearGradient></defs><rect x="0.5" y="0.5" width="11" height="11" fill="#fff" stroke="#8e8f8f"/><rect x="2.5" y="2.5" width="7" height="7" fill="url(#cb82_707)" stroke="#b0b0b0" stroke-width="1"/></svg><div class="b" style="left:110px;top:705px;width:43px;height:17px;border:1px solid #adb2b5;border-radius:3px;box-sizing:border-box;background:#f4f4f4;"></div><div class="t" style="top:706.49px;font-size:11px;line-height:14px;font-weight:normal;color:#8a8a8a;letter-spacing:-0.4px;left:-168.5px;width:600px;text-align:center;">Image</div><div class="t" style="top:706.49px;font-size:11px;line-height:14px;font-weight:normal;color:#000;letter-spacing:-0.4px;left:159px;">7/30/2014</div><div class="t" style="top:706.49px;font-size:11px;line-height:14px;font-weight:normal;color:#000;letter-spacing:-0.4px;left:233px;">Credit Card Paym...</div><div class="t" style="top:706.49px;font-size:11px;line-height:14px;font-weight:normal;color:#000;letter-spacing:-0.4px;left:327px;">Credit Card payment</div><div class="t" style="top:706.49px;font-size:11px;line-height:14px;font-weight:normal;color:#000;letter-spacing:-0.4px;right:438px;text-align:right;">$0.00</div><div class="t" style="top:706.49px;font-size:11px;line-height:14px;font-weight:normal;color:#f02020;letter-spacing:-0.4px;right:344px;text-align:right;">($1,599.89)</div><div class="b" style="left:697px;top:203px;width:306px;height:63px;border:1px solid #d5dfe5;border-radius:3px;box-sizing:border-box;"></div><div class="b" style="left:703px;top:198px;width:146px;height:12px;background:#fff;"></div><div class="t" style="top:194.89px;font-size:11px;line-height:14px;font-weight:normal;color:#000;letter-spacing:-0.52px;left:705.7px;">Beginning to previous statement</div><div class="t" style="top:218.39px;font-size:11px;line-height:14px;font-weight:normal;color:#000;letter-spacing:-0.4px;left:705.7px;">Total&nbsp; purchases and cashes</div><div class="t" style="top:239.59px;font-size:11px;line-height:14px;font-weight:normal;color:#000;letter-spacing:-0.4px;left:705.7px;">Total service charges</div><div class="b" style="left:884px;top:217px;width:113px;height:18px;background:#f0f0f0;border:1px solid #d5d9de;border-top-color:#abadb3;border-bottom-color:#e3e9ef;box-sizing:border-box;border-radius:1px;"></div><div class="t" style="top:218.69px;font-size:11px;line-height:14px;font-weight:normal;color:#000;letter-spacing:-0.4px;right:26px;text-align:right;">$6,844.59</div><div class="b" style="left:884px;top:238px;width:113px;height:19px;background:#f0f0f0;border:1px solid #d5d9de;border-top-color:#abadb3;border-bottom-color:#e3e9ef;box-sizing:border-box;border-radius:1px;"></div><div class="t" style="top:240.19px;font-size:11px;line-height:14px;font-weight:normal;color:#000;letter-spacing:-0.4px;right:26px;text-align:right;">$0.00</div><div class="t" style="top:277.76px;font-size:18px;line-height:22px;font-weight:bold;color:#000;letter-spacing:0px;left:541px;width:600px;text-align:center;">Reconciliation</div><div class="b" style="left:697px;top:309px;width:306px;height:115px;border:1px solid #d5dfe5;border-radius:3px;box-sizing:border-box;"></div><div class="b" style="left:703px;top:303px;width:50px;height:12px;background:#fff;"></div><div class="t" style="top:301.89px;font-size:11px;line-height:14px;font-weight:normal;color:#000;letter-spacing:-0.4px;left:705.3px;">From book</div><div class="t" style="top:316.99px;font-size:11px;line-height:14px;font-weight:normal;color:#000;letter-spacing:-0.4px;left:705.3px;">Previous balance</div><div class="t" style="top:335.69px;font-size:11px;line-height:14px;font-weight:normal;color:#000;letter-spacing:-0.4px;left:705.3px;">Total purchases, cashes and service</div><div class="t" style="top:347.79px;font-size:11px;line-height:14px;font-weight:normal;color:#000;letter-spacing:-0.4px;left:705.3px;">charges</div><div class="t" style="top:366.09px;font-size:11px;line-height:14px;font-weight:normal;color:#000;letter-spacing:-0.4px;left:705.3px;">Total payments and credit</div><div class="t" style="top:377.79px;font-size:11px;line-height:14px;font-weight:normal;color:#000;letter-spacing:-0.4px;left:705.3px;">adjustments</div><div class="t" style="top:401.89px;font-size:11px;line-height:14px;font-weight:normal;color:#000;letter-spacing:-0.4px;left:705.3px;">New balance</div><div class="b" style="left:884px;top:315px;width:113px;height:19px;background:#f0f0f0;border:1px solid #d5d9de;border-top-color:#abadb3;border-bottom-color:#e3e9ef;box-sizing:border-box;border-radius:1px;"></div><div class="t" style="top:317.19px;font-size:11px;line-height:14px;font-weight:normal;color:#000;letter-spacing:-0.4px;right:26px;text-align:right;">$1,599.89</div><div class="b" style="left:884px;top:339px;width:113px;height:19px;background:#f0f0f0;border:1px solid #d5d9de;border-top-color:#abadb3;border-bottom-color:#e3e9ef;box-sizing:border-box;border-radius:1px;"></div><div class="t" style="top:341.19px;font-size:11px;line-height:14px;font-weight:normal;color:#000;letter-spacing:-0.4px;right:26px;text-align:right;">$0.00</div><div class="b" style="left:884px;top:364px;width:113px;height:18px;background:#f0f0f0;border:1px solid #d5d9de;border-top-color:#abadb3;border-bottom-color:#e3e9ef;box-sizing:border-box;border-radius:1px;"></div><div class="t" style="top:365.19px;font-size:11px;line-height:14px;font-weight:normal;color:#000;letter-spacing:-0.4px;right:26px;text-align:right;">$0.00</div><div class="b" style="left:886px;top:390px;width:110px;height:3px;border:1px solid #c8d4dc;border-radius:2px;box-sizing:border-box;"></div><div class="b" style="left:884px;top:399px;width:113px;height:19px;background:#f0f0f0;border:1px solid #d5d9de;border-top-color:#abadb3;border-bottom-color:#e3e9ef;box-sizing:border-box;border-radius:1px;"></div><div class="t" style="top:401.69px;font-size:11px;line-height:14px;font-weight:normal;color:#000;letter-spacing:-0.4px;right:26px;text-align:right;">$1,599.89</div><div class="b" style="left:697px;top:437px;width:306px;height:36px;border:1px solid #d5dfe5;border-radius:3px;box-sizing:border-box;"></div><div class="b" style="left:703px;top:432px;width:102px;height:12px;background:#fff;"></div><div class="t" style="top:429.99px;font-size:11px;line-height:14px;font-weight:normal;color:#000;letter-spacing:-0.4px;left:705.4px;">From bank statement</div><div class="t" style="top:450.49px;font-size:11px;line-height:14px;font-weight:normal;color:#000;letter-spacing:-0.4px;left:706.3px;">New balance</div><div class="b" style="left:885px;top:448px;width:113px;height:19px;background:#fff;border:1px solid #d5d9de;border-top-color:#abadb3;border-bottom-color:#e3e9ef;box-sizing:border-box;border-radius:1px;"></div><div class="b" style="left:697px;top:486px;width:306px;height:80px;border:1px solid #d5dfe5;border-radius:3px;box-sizing:border-box;"></div><div class="t" style="top:501.19px;font-size:11px;line-height:14px;font-weight:normal;color:#000;letter-spacing:-0.4px;left:707.3px;">No variance for posting</div><div class="b" style="left:884px;top:494px;width:114px;height:19px;background:#f0f0f0;border:1px solid #d5d9de;border-top-color:#abadb3;border-bottom-color:#e3e9ef;box-sizing:border-box;border-radius:1px;"></div><div class="t" style="top:522.53px;font-size:10px;line-height:12px;font-weight:bold;color:#ff1010;letter-spacing:0.1px;left:709.2px;">Note:</div><div class="t" style="top:520.88px;font-size:9px;line-height:11px;font-weight:normal;color:#d8722a;letter-spacing:-0.2px;left:745.8px;">It should equal to zero for posting. For more</div><div class="t" style="top:531.78px;font-size:9px;line-height:11px;font-weight:normal;color:#d8722a;letter-spacing:-0.2px;left:745.8px;">information go to&nbsp; "Post Vairance" on help.</div><div class="b" style="left:928px;top:520px;width:69px;height:20px;border:1px solid #adb2b5;border-radius:3px;box-sizing:border-box;background:#f4f4f4;"></div><div class="t" style="top:523.19px;font-size:11px;line-height:14px;font-weight:normal;color:#444;letter-spacing:-0.4px;left:662.5px;width:600px;text-align:center;">Post</div><div class="t" style="top:585.80px;font-size:13px;line-height:16px;font-weight:bold;color:#000;letter-spacing:0px;left:550.3px;width:600px;text-align:center;">Account Balance</div><div class="b" style="left:880px;top:614px;width:21px;height:9px;background:#008000;"></div><div class="b" style="left:880px;top:627px;width:21px;height:9px;background:#ff0000;"></div><div class="t" style="top:612.49px;font-size:11px;line-height:14px;font-weight:normal;color:#222;letter-spacing:-0.1px;left:906px;">Available Credit</div><div class="t" style="top:625.89px;font-size:11px;line-height:14px;font-weight:normal;color:#222;letter-spacing:-0.1px;left:906px;">Credit Used</div><svg class="b" style="left:0;top:0" width="1020" height="832"><defs><linearGradient id="rimg" x1="0" x2="1" y1="0" y2="0"><stop offset="0" stop-color="#002200"/><stop offset="0.3" stop-color="#003c00"/><stop offset="0.55" stop-color="#146814"/><stop offset="0.8" stop-color="#004000"/><stop offset="1" stop-color="#001a00"/></linearGradient></defs><path d="M709.4 710.5 A75.6 65.8 0 0 0 860.6 710.5 L860.6 723.0 A75.6 65.8 0 0 1 709.4 723.0 Z" fill="url(#rimg)"/><path d="M859.83 719.88 A75.6 65.8 0 0 1 850.90 742.74 L850.90 755.24 A75.6 65.8 0 0 0 859.83 732.38 Z" fill="#4a0000"/><ellipse cx="785" cy="710.5" rx="75.6" ry="65.8" fill="#008000"/><path d="M785 710.5 L859.83 719.88 A75.6 65.8 0 0 1 850.90 742.74 Z" fill="#ff0000"/></svg><div class="t" style="top:691.69px;font-size:11px;line-height:14px;font-weight:normal;color:#111;letter-spacing:-0.5px;left:726.2px;">$2,825.43</div><div class="t" style="top:713.59px;font-size:11px;line-height:14px;font-weight:normal;color:#111;letter-spacing:-0.55px;left:803.2px;">$174.57</div><svg class="b" style="left:32px;top:38px" width="33" height="32" viewBox="0 0 33 32"><defs><linearGradient id="gl" x1="0" y1="0" x2="1" y2="0.3"><stop offset="0" stop-color="#1e5cc0"/><stop offset="0.5" stop-color="#2a70d0"/><stop offset="1" stop-color="#5aa0e8"/></linearGradient>
<linearGradient id="bk" x1="0" y1="0" x2="1" y2="0"><stop offset="0" stop-color="#d8a878"/><stop offset="1" stop-color="#a87048"/></linearGradient></defs>
<ellipse cx="17" cy="16.2" rx="15" ry="13.8" fill="url(#gl)"/>
<path d="M2.5 19 Q8 31 20 29 Q29 27 31 12" stroke="#60c050" stroke-width="1.4" fill="none"/>
<path d="M6 24 Q16 28 30 16" stroke="#b8e8a8" stroke-width="1" fill="none"/>
<path d="M14 2 Q20 0 25.8 6 L24 12 Q19 9 16 12 Z" fill="#48a848"/>
<path d="M6 7 L16.8 4.1 L20.9 22.5 L11.1 25 Z" fill="url(#bk)"/>
<rect x="15.2" y="11.9" width="6.5" height="9" fill="#6a7078" stroke="#d0d0d0" stroke-width="0.8"/>
<path d="M16.5 14h4M16.5 16h4M16.5 18h4" stroke="#9aa0a8" stroke-width="0.8"/></svg><svg class="b" style="left:120px;top:38px" width="32" height="32" viewBox="0 0 32 32"><path d="M1 17 L6.5 13 L6.5 29.5 L2 29.5 Z" fill="#3aa83a"/>
<path d="M21.5 1 L30 11 L30.5 28.5 L21.5 28.5 Z" fill="#3aa83a"/>
<circle cx="27" cy="10" r="1" fill="#145a14"/><circle cx="28" cy="17" r="1" fill="#145a14"/><circle cx="27.5" cy="23" r="1" fill="#145a14"/><circle cx="2.5" cy="19" r="1" fill="#145a14"/>
<rect x="6.5" y="1.5" width="16" height="29" rx="1.5" fill="#a8a8a8"/>
<rect x="7.5" y="2.5" width="14" height="25.5" fill="#1e3c6c"/>
<rect x="8.5" y="4" width="12" height="3.5" fill="#f0f0f0"/>
<rect x="8.5" y="7.5" width="8" height="2" fill="#b8b8b8"/>
<ellipse cx="18.5" cy="9.5" rx="1.5" ry="0.8" fill="#f0a020"/>
<g fill="#8aa0b8"><rect x="8.5" y="11.5" width="3" height="1.4"/><rect x="12.5" y="11.5" width="3" height="1.4"/><rect x="16.5" y="11.5" width="3" height="1.4"/></g>
<g fill="#d8e0e8">
<rect x="8.5" y="15" width="1.8" height="1.4"/><rect x="11" y="15" width="1.8" height="1.4"/><rect x="13.5" y="15" width="1.8" height="1.4"/><rect x="16" y="15" width="1.8" height="1.4"/><rect x="18.5" y="15" width="1.8" height="1.4"/>
<rect x="8.5" y="18" width="1.8" height="1.4"/><rect x="11" y="18" width="1.8" height="1.4"/><rect x="13.5" y="18" width="1.8" height="1.4"/><rect x="16" y="18" width="1.8" height="1.4"/><rect x="18.5" y="18" width="1.8" height="1.4"/>
<rect x="8.5" y="21" width="1.8" height="1.4"/><rect x="11" y="21" width="1.8" height="1.4"/><rect x="13.5" y="21" width="1.8" height="1.4"/><rect x="16" y="21" width="1.8" height="1.4"/><rect x="18.5" y="21" width="1.8" height="1.4"/>
<rect x="8.5" y="24" width="1.8" height="1.4"/><rect x="11" y="24" width="1.8" height="1.4"/><rect x="13.5" y="24" width="1.8" height="1.4"/><rect x="16" y="24" width="1.8" height="1.4"/><rect x="18.5" y="24" width="1.8" height="1.4"/>
</g></svg><svg class="b" style="left:206px;top:38px" width="32" height="32" viewBox="0 0 32 32"><defs><linearGradient id="ens" x1="0" y1="0" x2="1" y2="0"><stop offset="0" stop-color="#a0a0a0"/><stop offset="0.2" stop-color="#e8e8e8"/><stop offset="0.8" stop-color="#e0e0e0"/><stop offset="1" stop-color="#909090"/></linearGradient></defs>
<rect x="1" y="8" width="30" height="14" rx="3" fill="url(#ens)"/>
<rect x="5.6" y="4" width="20.5" height="10" rx="1.5" fill="#142a58"/>
<rect x="7" y="6" width="11" height="4.5" fill="#9a9a9a"/>
<rect x="17.5" y="0.5" width="7" height="9" fill="#fafafa" stroke="#b0b0b0" stroke-width="0.7"/>
<rect x="5.6" y="12" width="20.5" height="1.6" fill="#2a4a88"/>
<rect x="22" y="16" width="6.5" height="8" fill="#f4f4f4" stroke="#a0a0a0" stroke-width="0.6"/>
<rect x="5" y="14" width="21" height="5" fill="#fcfcfc" stroke="#c0c0c0" stroke-width="0.6"/>
<circle cx="23.5" cy="16.5" r="1.4" fill="#1a5ab0"/><circle cx="27" cy="19" r="1.3" fill="#1a5ab0"/>
<rect x="1.5" y="19.5" width="20.5" height="9" fill="#ffffff" stroke="#b8b8b8" stroke-width="0.6"/>
<rect x="2.5" y="28.5" width="20" height="2" fill="#3a3a3a" opacity="0.8"/>
<circle cx="20" cy="21.5" r="1.3" fill="#1a5ab0"/>
<rect x="16.5" y="25" width="4.5" height="1.5" fill="#777"/>
<rect x="3.5" y="21" width="3" height="1" fill="#999"/></svg><svg class="b" style="left:288px;top:39px" width="28" height="29" viewBox="0 0 28 29"><defs><linearGradient id="pg" x1="0" y1="0" x2="0" y2="1"><stop offset="0" stop-color="#fdfdfd"/><stop offset="1" stop-color="#dcdcdc"/></linearGradient></defs>
<path d="M4 1.5 L19 1.5 L26 8.5 L26 27.5 L4 27.5 Z" fill="url(#pg)" stroke="#b0b0b0" stroke-width="1"/>
<path d="M19 1.5 L19 8.5 L26 8.5" fill="#e8e8e8" stroke="#b0b0b0" stroke-width="1"/>
<g stroke="#b8b8b8" stroke-width="0.8"><path d="M9 13h13M9 16h13M9 19h13M9 22h13"/></g>
<path d="M5.6 0.3 h4.4 v4.3 h4.4 v4.4 h-4.4 v4.4 h-4.4 v-4.4 h-4.4 v-4.4 h4.4 Z" fill="#a8d030" stroke="#3a8a10" stroke-width="1"/><path d="M7.8 1.5 v11 M2 6.8 h11.6" stroke="#d0e870" stroke-width="1"/></svg><svg class="b" style="left:355px;top:40px" width="29" height="28" viewBox="0 0 29 28"><defs><linearGradient id="svs" x1="0" y1="0" x2="1" y2="0"><stop offset="0" stop-color="#f0f0f0"/><stop offset="1" stop-color="#b8b8b8"/></linearGradient>
<linearGradient id="svl" x1="0" y1="0" x2="0" y2="1"><stop offset="0" stop-color="#fafafa"/><stop offset="1" stop-color="#d8d8d8"/></linearGradient></defs>
<rect x="1" y="1" width="27" height="26" rx="3.5" fill="#2c2c2c"/>
<rect x="6.7" y="1" width="15.6" height="9" rx="1" fill="url(#svs)"/>
<rect x="15.9" y="2" width="2.8" height="6" fill="#2a2a2a"/>
<path d="M6.2 27 L6.2 16.5 Q6.2 14.9 8 14.9 L22 14.9 Q23.7 14.9 23.7 16.5 L23.7 27 Z" fill="url(#svl)"/>
<g stroke="#b8b8b8" stroke-width="0.7"><path d="M8 18.5h14M8 21h14M8 23.5h14"/></g></svg><svg class="b" style="left:420px;top:39px" width="22" height="30" viewBox="0 0 22 30"><g fill="none" stroke-linecap="round" stroke-linejoin="round">
<path d="M10.5 2.2 V26.8" stroke="#80a830" stroke-width="4.6"/>
<path d="M17 8.2 Q16 4.3 10.5 4.3 Q3.6 4.3 3.6 9.3 Q3.6 13.3 10.5 14.3 Q17.8 15.5 17.8 20 Q17.8 24.6 10.5 24.6 Q4.5 24.6 3.3 20.5" stroke="#80a830" stroke-width="5.4"/>
<path d="M10.5 2.2 V26.8" stroke="#b4d858" stroke-width="2.8"/>
<path d="M17 8.2 Q16 4.3 10.5 4.3 Q3.6 4.3 3.6 9.3 Q3.6 13.3 10.5 14.3 Q17.8 15.5 17.8 20 Q17.8 24.6 10.5 24.6 Q4.5 24.6 3.3 20.5" stroke="#b4d858" stroke-width="3.6"/>
</g>
<circle cx="10.5" cy="24.3" r="1.6" fill="#f0d8a0"/></svg><svg class="b" style="left:481px;top:39px" width="32" height="28" viewBox="0 0 32 28"><defs><linearGradient id="pr" x1="0" y1="0" x2="0" y2="1"><stop offset="0" stop-color="#c8c8c8"/><stop offset="0.3" stop-color="#f8f8f8"/><stop offset="0.55" stop-color="#d8d8d8"/><stop offset="0.7" stop-color="#707070"/><stop offset="1" stop-color="#181818"/></linearGradient>
<linearGradient id="pp" x1="0" y1="0" x2="0" y2="1"><stop offset="0" stop-color="#707070"/><stop offset="0.15" stop-color="#fdfdfd"/><stop offset="1" stop-color="#f4f4f4"/></linearGradient></defs>
<rect x="9.3" y="1.5" width="13.4" height="11" rx="2" fill="url(#pp)" stroke="#c8c8c8" stroke-width="0.8"/>
<path d="M1.5 17 Q1.5 11.5 7 11.5 L24 11.5 Q29.6 11.5 29.6 17 L29.6 21 Q29.6 25.7 24 25.7 L7 25.7 Q1.5 25.7 1.5 21 Z" fill="url(#pr)"/>
<rect x="9.7" y="12.5" width="12.1" height="7.2" fill="#5a1a9a"/>
<g stroke="#b040c0" stroke-width="0.9"><path d="M10.5 15h10.5M10.5 17.5h10.5"/></g></svg><svg class="b" style="left:553px;top:40px" width="29" height="29" viewBox="0 0 29 29"><defs><linearGradient id="gr" x1="0" y1="0" x2="0" y2="1"><stop offset="0" stop-color="#e4ecf4"/><stop offset="0.5" stop-color="#b4bcd4"/><stop offset="1" stop-color="#7a7aa8"/></linearGradient></defs>
<polygon points="12.86,3.83 13.07,1.08 15.93,1.08 16.14,3.83 17.15,4.05 18.16,4.37 19.72,2.10 22.20,3.52 21.01,6.01 21.77,6.70 22.49,7.49 24.98,6.30 26.40,8.78 24.13,10.34 24.44,11.32 24.67,12.36 27.42,12.57 27.42,15.43 24.67,15.64 24.45,16.65 24.13,17.66 26.40,19.22 24.98,21.70 22.49,20.51 21.80,21.27 21.01,21.99 22.20,24.48 19.72,25.90 18.16,23.63 17.18,23.94 16.14,24.17 15.93,26.92 13.07,26.92 12.86,24.17 11.85,23.95 10.84,23.63 9.28,25.90 6.80,24.48 7.99,21.99 7.23,21.30 6.51,20.51 4.02,21.70 2.60,19.22 4.87,17.66 4.56,16.68 4.33,15.64 1.58,15.43 1.58,12.57 4.33,12.36 4.55,11.35 4.87,10.34 2.60,8.78 4.02,6.30 6.51,7.49 7.20,6.73 7.99,6.01 6.80,3.52 9.28,2.10 10.84,4.37 11.82,4.06" fill="url(#gr)" stroke="#6a7088" stroke-width="0.8"/>
<circle cx="14.5" cy="14" r="7" fill="none" stroke="#8890a8" stroke-width="1.2"/>
<circle cx="14.5" cy="14" r="5" fill="#c0c8dc"/>
<circle cx="14.5" cy="14" r="3" fill="#ffffff" stroke="#70788c" stroke-width="0.8"/></svg><svg class="b" style="left:618px;top:38px" width="31" height="29" viewBox="0 0 31 29"><path fill-rule="evenodd" d="M2.6 14.5 A13 12.9 0 1 0 28.6 14.5 A13 12.9 0 1 0 2.6 14.5 Z M11.1 14.5 A4.5 8 0 1 0 20.1 14.5 A4.5 8 0 1 0 11.1 14.5 Z" fill="#0c0c0c"/>
<path d="M15.6 1.6 A13 12.9 0 0 1 28.3 11.5 L20 11.5 A4.5 8 0 0 0 15.6 6.5 Z" fill="#7ab830"/>
<path d="M17 11 L30 11 L24 19 Z" fill="#8cc83a"/>
<path d="M15.6 27.4 A13 12.9 0 0 1 3.5 19 L11.6 17 A4.5 8 0 0 0 15.6 22.5 Z" fill="#1a58a0"/>
<path d="M0.5 20 L13.5 20 L7.5 12 Z" fill="#3a98e0"/>
<path d="M22 24 A13 12.9 0 0 1 15.6 27.4 L15.6 22.5 Z" fill="#0a1830" opacity="0.6"/></svg><svg class="b" style="left:690px;top:38px" width="22" height="31" viewBox="0 0 22 31"><defs><linearGradient id="lk" x1="0" y1="0" x2="1" y2="0"><stop offset="0" stop-color="#707070"/><stop offset="0.3" stop-color="#e8e8e8"/><stop offset="0.55" stop-color="#a0a0a0"/><stop offset="0.8" stop-color="#d8d8d8"/><stop offset="1" stop-color="#606060"/></linearGradient></defs>
<path d="M1 28.5 Q1 18 8 16.5 Q15 17.5 17 24 L17 28.5 Z" fill="#1a1a1a"/>
<path d="M6 17 L7.5 28 L9 17 Z" fill="#f0f0f0"/>
<ellipse cx="8" cy="9.5" rx="5.5" ry="7" fill="#a87850"/>
<path d="M2.5 8 Q2.5 1.5 8.5 1.5 Q14 1.5 14 8 L14 12 Q13 6 11.5 5 Q8 4.5 4 6 Q3 7 2.5 9 Z" fill="#3c3c3c"/>
<path d="M1.5 7.5 L14 7.5" stroke="#222" stroke-width="1"/>
<rect x="2.5" y="7.5" width="4.5" height="2.5" fill="#e8e8e8" stroke="#333" stroke-width="0.7"/><rect x="8" y="7.5" width="4.5" height="2.5" fill="#e8e8e8" stroke="#333" stroke-width="0.7"/>
<path d="M12.8 20 L12.8 17.5 Q12.8 14.5 16 14.5 Q19.2 14.5 19.2 17.5 L19.2 20" fill="none" stroke="#b0b0b0" stroke-width="1.6"/>
<rect x="11" y="20" width="10" height="9.5" rx="0.8" fill="url(#lk)"/></svg><svg class="b" style="left:752px;top:41px" width="27" height="27" viewBox="0 0 27 27"><defs><radialGradient id="ab" cx="0.45" cy="0.3" r="0.8"><stop offset="0" stop-color="#5ab8f8"/><stop offset="0.7" stop-color="#1a80d8"/><stop offset="1" stop-color="#0a58a8"/></radialGradient></defs>
<circle cx="13.5" cy="13.5" r="12.5" fill="url(#ab)"/>
<circle cx="13.5" cy="6.5" r="2.2" fill="#fff"/>
<path d="M10 10 L15.5 10 L15.5 19.5 L17 19.5 L17 21.5 L10 21.5 L10 19.5 L11.5 19.5 L11.5 12 L10 12 Z" fill="#f4f4f4"/></svg><svg class="b" style="left:818px;top:40px" width="26" height="27" viewBox="0 0 26 27"><defs><radialGradient id="hp" cx="0.45" cy="0.3" r="0.8"><stop offset="0" stop-color="#90d0f8"/><stop offset="0.7" stop-color="#4aa0e0"/><stop offset="1" stop-color="#2a78c0"/></radialGradient></defs>
<circle cx="13.5" cy="13.5" r="12" fill="url(#hp)"/>
<text x="13.5" y="21" text-anchor="middle" font-family="Liberation Sans" font-weight="bold" font-size="18" fill="#fff">?</text></svg></body></html>
